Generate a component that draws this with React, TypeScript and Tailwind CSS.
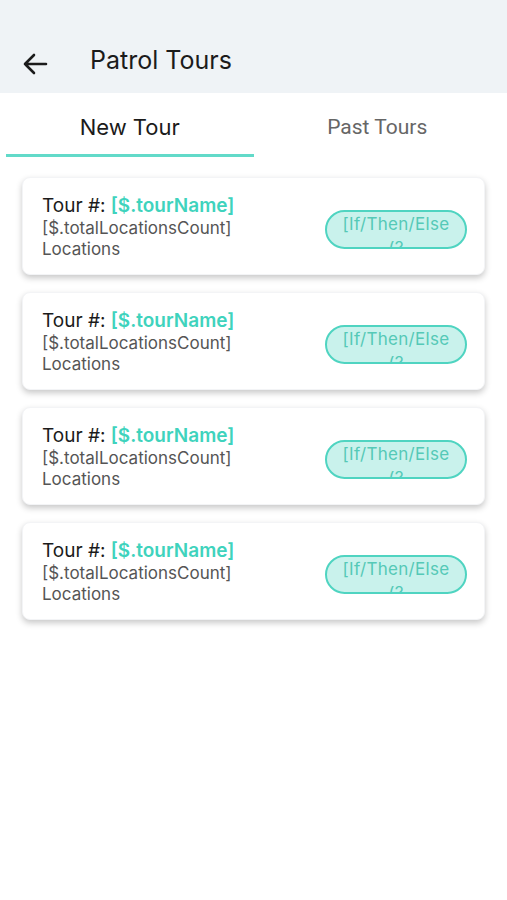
const tours = [1, 2, 3, 4];

function TourCard() {
  return (
    <div className="flex items-center justify-between rounded-lg bg-white h-[98px] pl-[19px] pr-[17px] shadow-[0_3px_6px_rgba(0,0,0,0.22)] border border-gray-100">
      <div className="flex flex-col pt-[2px]">
        <div className="text-[19px] leading-[24px] text-[#1b1b1b]">
          Tour #: <span className="text-[#3fd3bd] font-semibold">[$.tourName]</span>
        </div>
        <div className="text-[17px] leading-[21px] text-[#555]">[$.totalLocationsCount]</div>
        <div className="text-[17px] leading-[21px] text-[#555]">Locations</div>
      </div>
      <div className="w-[142px] h-[39px] rounded-full border-2 border-[#4fd4c1] bg-[#c9f2ec] overflow-hidden flex justify-center mt-[6px]">
        <span className="text-[17px] leading-[24px] tracking-[0.3px] text-[#55c9b7] text-center w-[118px]">
          [If/Then/Else (?
        </span>
      </div>
    </div>
  );
}

export default function App() {
  return (
    <div className="w-[507px] h-[900px] bg-white" style={{ fontFamily: "Inter, 'Noto Sans', sans-serif" }}>
      <div className="bg-[#eff3f6] h-[93px] flex items-end pb-[18px] pl-[22px]">
        <svg width="26" height="22" viewBox="0 0 26 22" fill="none" stroke="#1b1b1b" strokeWidth="2.6" strokeLinecap="round" strokeLinejoin="round">
          <path d="M24 11H3M12 2L3 11l9 9" />
        </svg>
        <span className="ml-[42px] text-[25px] leading-[30px] text-[#1b1b1b]">Patrol Tours</span>
      </div>
      <div className="flex h-[64px] px-[6px]">
        <div className="flex-1 flex flex-col items-center justify-end">
          <span className="text-[22px] leading-[26px] text-[#1b1b1b] mb-[14px]">New Tour</span>
          <div className="w-full h-[3px] bg-[#62dac9]" />
        </div>
        <div className="flex-1 flex flex-col items-center justify-end">
          <span className="text-[21px] leading-[26px] text-[#666] mb-[17px]" style={{ fontFamily: "Roboto, sans-serif" }}>Past Tours</span>
        </div>
      </div>
      <div className="flex flex-col gap-[17px] px-[22px] pt-[20px]">
        {tours.map((t) => (
          <TourCard key={t} />
        ))}
      </div>
    </div>
  );
}
